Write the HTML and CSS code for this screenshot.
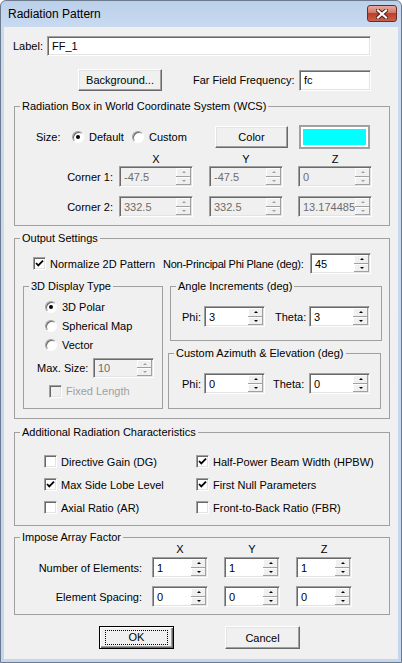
FILE: index.html
```html
<!DOCTYPE html>
<html>
<head>
  <meta charset="UTF-8">
  <meta name="viewport" content="width=device-width, initial-scale=1.0">
  <title>Radiation Pattern</title>
  <link rel="stylesheet" href="styles.css">
</head>
<body>
  <div class="window">
    <div class="titlebar">
      <span class="title">Radiation Pattern</span>
      <span class="close">
        <svg width="12" height="10" viewBox="0 0 12 10">
          <path d="M2 1.5 L10 8.5 M10 1.5 L2 8.5" stroke="#4a1f18" stroke-width="4" stroke-linecap="square"/>
          <path d="M2 1.5 L10 8.5 M10 1.5 L2 8.5" stroke="#ffffff" stroke-width="2.2" stroke-linecap="square"/>
        </svg>
      </span>
    </div>

    <div class="content">
      <div class="row row-label">
        <span class="lbl-label">Label:</span>
        <input class="edit label-edit" type="text" value="FF_1">
      </div>

      <div class="row row-bg">
        <button class="btn bg-btn">Background...</button>
        <span class="ff-label">Far Field Frequency:</span>
        <input class="edit ff-edit" type="text" value="fc">
      </div>

      <fieldset class="group wcs">
        <legend>Radiation Box in World Coordinate System (WCS)</legend>
        <div class="row size-row">
          <span class="size-label">Size:</span>
          <span class="opt opt-default"><i class="rb on"></i>Default</span>
          <span class="opt opt-custom"><i class="rb"></i>Custom</span>
          <button class="btn color-btn">Color</button>
          <span class="swatch"><span class="swatch-fill"></span></span>
        </div>
        <div class="row axis-row">
          <span class="axis-spacer"></span>
          <span class="axis">X</span>
          <span class="axis">Y</span>
          <span class="axis">Z</span>
        </div>
        <div class="row corner-row">
          <span class="corner-label">Corner 1:</span>
          <div class="spin off"><input value="-47.5" disabled><span class="updown"><i class="up"></i><i class="dn"></i></span></div>
          <div class="spin off"><input value="-47.5" disabled><span class="updown"><i class="up"></i><i class="dn"></i></span></div>
          <div class="spin off"><input value="0" disabled><span class="updown"><i class="up"></i><i class="dn"></i></span></div>
        </div>
        <div class="row corner-row corner-2">
          <span class="corner-label">Corner 2:</span>
          <div class="spin off"><input value="332.5" disabled><span class="updown"><i class="up"></i><i class="dn"></i></span></div>
          <div class="spin off"><input value="332.5" disabled><span class="updown"><i class="up"></i><i class="dn"></i></span></div>
          <div class="spin off"><input value="13.174485" disabled><span class="updown"><i class="up"></i><i class="dn"></i></span></div>
        </div>
      </fieldset>

      <fieldset class="group output">
        <legend>Output Settings</legend>
        <div class="row norm-row">
          <span class="check norm-item"><i class="cb on"><svg width="9" height="9" viewBox="0 0 9 9"><path d="M1 4 L3.3 6.4 L8 1.6" fill="none" stroke="#000" stroke-width="1.8"/></svg></i>Normalize 2D Pattern</span>
          <span class="npp-label">Non-Principal Phi Plane (deg):</span>
          <div class="spin npp-spin"><input value="45"><span class="updown"><i class="up"></i><i class="dn"></i></span></div>
        </div>

        <div class="cols">
          <fieldset class="group dtype">
            <legend>3D Display Type</legend>
            <div class="radio-row first"><i class="rb on"></i>3D Polar</div>
            <div class="radio-row"><i class="rb"></i>Spherical Map</div>
            <div class="radio-row"><i class="rb"></i>Vector</div>
            <div class="row maxsize-row">
              <span class="maxsize-label">Max. Size:</span>
              <div class="spin off maxsize-spin"><input value="10" disabled><span class="updown"><i class="up"></i><i class="dn"></i></span></div>
            </div>
            <div class="check fixed-row disabled"><i class="cb"></i>Fixed Length</div>
          </fieldset>

          <div class="rightcol">
            <fieldset class="group angle">
              <legend>Angle Increments (deg)</legend>
              <div class="row pair-row">
                <span class="phi-label">Phi:</span>
                <div class="spin pair-spin"><input value="3"><span class="updown"><i class="up"></i><i class="dn"></i></span></div>
                <span class="theta-label">Theta:</span>
                <div class="spin pair-spin"><input value="3"><span class="updown"><i class="up"></i><i class="dn"></i></span></div>
              </div>
            </fieldset>
            <fieldset class="group azel">
              <legend>Custom Azimuth &amp; Elevation (deg)</legend>
              <div class="row pair-row">
                <span class="phi-label">Phi:</span>
                <div class="spin pair-spin"><input value="0"><span class="updown"><i class="up"></i><i class="dn"></i></span></div>
                <span class="theta-label">Theta:</span>
                <div class="spin pair-spin"><input value="0"><span class="updown"><i class="up"></i><i class="dn"></i></span></div>
              </div>
            </fieldset>
          </div>
        </div>
      </fieldset>

      <fieldset class="group extra">
        <legend>Additional Radiation Characteristics</legend>
        <div class="extra-grid">
          <span class="check"><i class="cb"></i>Directive Gain (DG)</span>
          <span class="check"><i class="cb on"><svg width="9" height="9" viewBox="0 0 9 9"><path d="M1 4 L3.3 6.4 L8 1.6" fill="none" stroke="#000" stroke-width="1.8"/></svg></i>Half-Power Beam Width (HPBW)</span>
          <span class="check"><i class="cb on"><svg width="9" height="9" viewBox="0 0 9 9"><path d="M1 4 L3.3 6.4 L8 1.6" fill="none" stroke="#000" stroke-width="1.8"/></svg></i>Max Side Lobe Level</span>
          <span class="check"><i class="cb on"><svg width="9" height="9" viewBox="0 0 9 9"><path d="M1 4 L3.3 6.4 L8 1.6" fill="none" stroke="#000" stroke-width="1.8"/></svg></i>First Null Parameters</span>
          <span class="check"><i class="cb"></i>Axial Ratio (AR)</span>
          <span class="check"><i class="cb"></i>Front-to-Back Ratio (FBR)</span>
        </div>
      </fieldset>

      <fieldset class="group array">
        <legend>Impose Array Factor</legend>
        <div class="row array-head">
          <span class="array-spacer"></span>
          <span class="axis small">X</span>
          <span class="axis small">Y</span>
          <span class="axis small">Z</span>
        </div>
        <div class="row array-row">
          <span class="array-label">Number of Elements:</span>
          <div class="spin array-spin"><input value="1"><span class="updown"><i class="up"></i><i class="dn"></i></span></div>
          <div class="spin array-spin"><input value="1"><span class="updown"><i class="up"></i><i class="dn"></i></span></div>
          <div class="spin array-spin"><input value="1"><span class="updown"><i class="up"></i><i class="dn"></i></span></div>
        </div>
        <div class="row array-row second">
          <span class="array-label">Element Spacing:</span>
          <div class="spin array-spin"><input value="0"><span class="updown"><i class="up"></i><i class="dn"></i></span></div>
          <div class="spin array-spin"><input value="0"><span class="updown"><i class="up"></i><i class="dn"></i></span></div>
          <div class="spin array-spin"><input value="0"><span class="updown"><i class="up"></i><i class="dn"></i></span></div>
        </div>
      </fieldset>

      <div class="row buttons">
        <button class="btn default"><span class="focus">OK</span></button>
        <button class="btn cancel">Cancel</button>
      </div>
    </div>
  </div>
</body>
</html>
```

FILE: styles.css
```css
body {
  margin: 0;
  background: #ffffff;
  font-family: "Liberation Sans", Arial, sans-serif;
  font-size: 11px;
  color: #000000;
  white-space: nowrap;
}
.window {
  width: 402px;
  height: 663px;
  box-sizing: border-box;
  border: 1px solid #6b7a8c;
  border-radius: 6px 6px 0 0;
  background: linear-gradient(#bcd0ea, #c9daf0 26px, #c3d6ee);
  padding: 0 3px 3px;
  display: flex;
  flex-direction: column;
}
.titlebar {
  height: 26px;
  flex: none;
  display: flex;
  justify-content: space-between;
  align-items: flex-start;
}
.title {
  font-size: 12px;
  line-height: 14px;
  margin: 6px 0 0 4px;
}
.close {
  width: 30px;
  height: 17px;
  box-sizing: border-box;
  margin: 4px 1px 0 0;
  border: 1px solid #6e2b22;
  border-radius: 3px;
  background: linear-gradient(#e7aa9f, #d27766 45%, #bb3f2c 50%, #c9604b);
  display: flex;
  align-items: center;
  justify-content: center;
}
.content {
  flex: 1;
  background: #f0f0f0;
}
.row {
  display: flex;
  align-items: center;
}

/* edits, buttons */
.edit {
  height: 20px;
  box-sizing: border-box;
  margin: 0;
  padding: 0 0 0 4px;
  border: 1px solid;
  border-color: #a0a0a0 #ffffff #ffffff #a0a0a0;
  box-shadow: inset 1px 1px #696969, inset -1px -1px #e3e3e3;
  background: #ffffff;
  font: inherit;
  color: #000;
  outline: none;
}
.btn {
  box-sizing: border-box;
  margin: 0;
  padding: 0;
  height: 22px;
  font: inherit;
  color: #000;
  background: #f0f0f0;
  border: 1px solid;
  border-color: #ffffff #696969 #696969 #ffffff;
  box-shadow: inset -1px -1px #a0a0a0, inset 1px 1px #e3e3e3;
}
.btn.default {
  border: 1px solid #000000;
  box-shadow: inset 1px 1px #ffffff, inset -1px -1px #696969, inset -2px -2px #a0a0a0;
  display: flex;
  align-items: center;
  justify-content: center;
}
.btn .focus {
  display: block;
  width: 61px;
  height: 13px;
  line-height: 13px;
  border: 1px dotted #000;
}

/* spin boxes */
.spin {
  display: flex;
  height: 21px;
  box-sizing: border-box;
  padding: 1px;
  border: 1px solid;
  border-color: #a0a0a0 #ffffff #ffffff #a0a0a0;
  box-shadow: inset 1px 1px #696969, inset -1px -1px #e3e3e3;
  background: #ffffff;
}
.spin input {
  flex: 1;
  min-width: 0;
  margin: 0;
  border: 0;
  padding: 0 0 0 3px;
  background: transparent;
  font: inherit;
  color: #000;
  outline: none;
}
.spin.off {
  background: #f0f0f0;
}
.spin.off input {
  color: #6d6d6d;
}
.updown {
  flex: none;
  width: 15px;
  display: flex;
  flex-direction: column;
}
.updown i {
  flex: 1;
  display: flex;
  align-items: center;
  justify-content: center;
  background: #f0f0f0;
  box-shadow: inset -1px -1px #a0a0a0, inset 1px 1px #ffffff;
}
.updown i::after {
  content: "";
  width: 0;
  height: 0;
  border-left: 2px solid transparent;
  border-right: 2px solid transparent;
}
.updown .up::after {
  border-bottom: 2px solid #000;
}
.updown .dn::after {
  border-top: 2px solid #000;
}
.spin.off .updown .up::after {
  border-bottom-color: #a0a0a0;
}
.spin.off .updown .dn::after {
  border-top-color: #a0a0a0;
}

/* radios and checks */
.rb {
  flex: none;
  width: 12px;
  height: 12px;
  box-sizing: border-box;
  border-radius: 50%;
  border: 1px solid;
  border-color: #a0a0a0 #ffffff #ffffff #a0a0a0;
  box-shadow: inset 1px 1px #696969;
  background: #ffffff;
  margin-right: 5px;
  display: flex;
  align-items: center;
  justify-content: center;
}
.rb.on::after {
  content: "";
  width: 4px;
  height: 4px;
  border-radius: 50%;
  background: #000;
}
.check {
  display: flex;
  align-items: center;
}
.cb {
  flex: none;
  width: 13px;
  height: 13px;
  box-sizing: border-box;
  border: 1px solid;
  border-color: #a0a0a0 #ffffff #ffffff #a0a0a0;
  box-shadow: inset 1px 1px #696969, inset -1px -1px #e3e3e3;
  background: #ffffff;
  margin-right: 4px;
  display: flex;
  align-items: center;
  justify-content: center;
}
.check.disabled {
  color: #a0a0a0;
}
.check.disabled .cb {
  background: #f0f0f0;
}

/* group boxes */
.group {
  box-sizing: border-box;
  margin: 0;
  padding: 0;
  min-width: 0;
  border: 1px solid #a0a0a0;
}
.group legend {
  padding: 0 2px;
  margin-left: 5px;
  line-height: 13px;
}

/* top rows */
.row-label {
  margin: 9px 0 0 9px;
  height: 20px;
}
.lbl-label {
  width: 34px;
}
.label-edit {
  width: 324px;
}
.row-bg {
  margin: 13px 0 0 74px;
  height: 22px;
}
.bg-btn {
  width: 84px;
}
.ff-label {
  margin-left: 31px;
  width: 106px;
}
.ff-edit {
  width: 72px;
  height: 21px;
}

/* WCS box */
.wcs {
  margin: 9px 0 0 10px;
  width: 376px;
  height: 126px;
}
.size-row {
  margin: 13px 0 0 21px;
  height: 22px;
}
.size-label {
  width: 36px;
}
.opt {
  display: flex;
  align-items: center;
}
.opt-default {
  width: 60px;
}
.opt-custom {
  width: 83px;
}
.color-btn {
  width: 73px;
}
.swatch {
  margin-left: 11px;
  width: 71px;
  height: 24px;
  box-sizing: border-box;
  border: 2px solid #a0a0a0;
  padding: 2px;
  background: #ffffff;
  display: flex;
}
.swatch-fill {
  flex: 1;
  background: #00ffff;
}
.axis-row {
  margin-top: 4px;
  height: 13px;
}
.axis-spacer {
  width: 104px;
}
.axis {
  width: 74px;
  text-align: center;
}
.axis + .axis {
  margin-left: 16px;
}
.axis + .axis + .axis {
  margin-left: 15px;
}
.corner-row {
  margin-top: 1px;
  height: 21px;
}
.corner-row.corner-2 {
  margin-top: 9px;
}
.corner-label {
  width: 104px;
  box-sizing: border-box;
  padding-right: 6px;
  text-align: right;
}
.corner-row .spin {
  width: 74px;
}
.corner-row .spin + .spin {
  margin-left: 16px;
}
.corner-row .spin + .spin + .spin {
  margin-left: 15px;
}

/* output settings */
.output {
  margin: 6px 0 0 10px;
  width: 376px;
  height: 187px;
}
.norm-row {
  margin: 8px 0 0 18px;
  height: 21px;
}
.norm-item {
  width: 130px;
}
.npp-label {
  width: 147px;
  letter-spacing: -0.25px;
}
.npp-spin {
  width: 61px;
}
.cols {
  display: flex;
  align-items: flex-start;
  margin-top: 6px;
}
.dtype {
  margin-left: 8px;
  width: 140px;
  height: 129px;
}
.radio-row {
  display: flex;
  align-items: center;
  height: 19px;
  padding-left: 21px;
}
.radio-row.first {
  margin-top: 4px;
}
.maxsize-row {
  margin-top: 4px;
  padding-left: 13px;
  height: 20px;
}
.maxsize-label {
  width: 56px;
}
.maxsize-spin {
  width: 61px;
  height: 20px;
}
.fixed-row {
  margin-top: 6px;
  padding-left: 25px;
  height: 14px;
}
.rightcol {
  margin-left: 5px;
  display: flex;
  flex-direction: column;
}
.angle {
  margin-left: 2px;
  width: 212px;
  height: 61px;
}
.azel {
  margin-top: 6px;
  width: 213px;
  height: 62px;
}
.pair-row {
  margin-top: 13px;
  padding-left: 11px;
  height: 21px;
}
.azel .pair-row {
  padding-left: 13px;
}
.phi-label {
  width: 22px;
}
.pair-spin {
  width: 61px;
}
.theta-label {
  margin-left: 10px;
  width: 34px;
}
.azel .theta-label {
  margin-left: 8px;
  width: 36px;
}

/* additional characteristics */
.extra {
  margin: 7px 0 0 10px;
  width: 376px;
  height: 100px;
}
.extra-grid {
  margin-top: 16px;
  padding-left: 29px;
  display: grid;
  grid-template-columns: 152px auto;
  grid-auto-rows: 13px;
  row-gap: 10px;
}

/* array factor */
.array {
  margin: 5px 0 0 10px;
  width: 376px;
  height: 84px;
}
.array-head {
  margin-top: -2px;
  height: 13px;
}
.array-spacer {
  width: 137px;
}
.axis.small {
  width: 56px;
}
.axis.small + .axis.small {
  margin-left: 16px;
}
.array-row {
  margin-top: 2px;
  height: 21px;
}
.array-row.second {
  margin-top: 8px;
}
.array-label {
  width: 137px;
  box-sizing: border-box;
  padding-right: 10px;
  text-align: right;
}
.array-spin {
  width: 56px;
}
.array-spin + .array-spin {
  margin-left: 16px;
}

/* dialog buttons */
.buttons {
  margin-top: 11px;
  padding-left: 95px;
}
.buttons .btn {
  width: 75px;
  height: 23px;
}
.buttons .cancel {
  margin-left: 51px;
}
```
